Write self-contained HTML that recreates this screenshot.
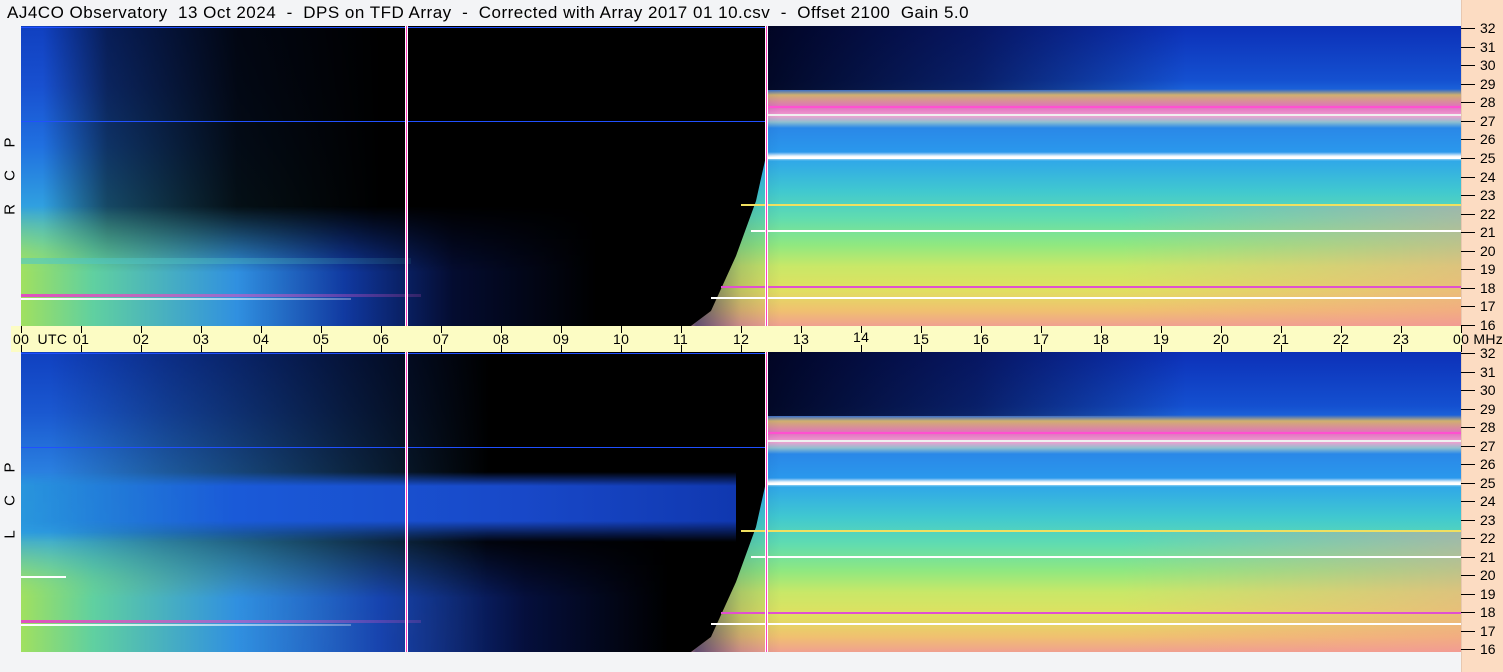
<!DOCTYPE html>
<html><head><meta charset="utf-8"><style>
*{margin:0;padding:0;box-sizing:border-box}
body{width:1503px;height:672px;background:#f3f4f6;position:relative;overflow:hidden;font-family:"Liberation Sans",sans-serif;color:#000}
.abs{position:absolute}
.title{left:7px;top:3px;font-size:17px;white-space:pre;letter-spacing:0.5px}
.panel{position:absolute;left:21px;width:1440px;height:300px;background:#000;overflow:hidden}
.panel div{position:absolute}
.axis{left:1461px;top:0;width:42px;height:672px;background:#fcdcc2;border-left:1px solid #e8c8b0}
.strip{left:11px;top:326px;width:1451px;height:26px;background:#fcfcc4}
.tk{position:absolute;width:1px;height:7px;background:#000}
.ul{position:absolute;top:331px;font-size:14px;letter-spacing:0.3px}
.ml{position:absolute;left:1480px;font-size:14px;line-height:14px}
.mt{position:absolute;left:1461px;width:14px;height:1px;background:#000}
.lab{position:absolute;left:3px;font-size:15px;transform:rotate(-90deg);width:14px;text-align:center}
.vl{top:0;width:3px;height:300px;background:linear-gradient(90deg,#fff 0,#fff 33%,#ff40c0 33%,#ff40c0 66%,#fff 66%)}
.hl{left:0;height:2px;background:#fff}
.rr{left:0;top:0;width:1440px;height:300px;clip-path:polygon(745px 0,745px 130px,735px 175px,715px 230px,690px 285px,670px 300px,1440px 300px,1440px 0)}
</style></head><body>
<div class="abs title">AJ4CO Observatory  13 Oct 2024  -  DPS on TFD Array  -  Corrected with Array 2017 01 10.csv  -  Offset 2100  Gain 5.0</div>

<!-- TOP PANEL -->
<div class="panel" style="top:26px">
  <div style="left:0;top:0;width:720px;height:300px;background:linear-gradient(90deg,rgba(0,0,0,0) 0,rgba(0,0,0,0) 3%,rgba(0,0,0,.55) 12%,rgba(0,0,0,.9) 30%,#000 50%),linear-gradient(180deg,#1040c0 0,#1850d0 20%,#2070e0 40%,#30a0e0 60%,#50c0c0 72%,#90dc80 82%,#c8e060 92%,#b0d070 100%)"></div>
  <div style="left:0;top:180px;width:720px;height:120px;-webkit-mask-image:linear-gradient(180deg,transparent 0,#000 55%);background:linear-gradient(90deg,#a0e060 0,#60d0a0 10%,#3090e0 30%,rgba(20,70,200,.8) 45%,rgba(10,30,120,.4) 60%,rgba(0,0,0,0) 80%)"></div>
  <div style="left:0;top:232px;width:390px;height:6px;background:linear-gradient(90deg,rgba(80,200,200,.6),rgba(80,200,200,.1))"></div>
  <div style="left:0;top:268px;width:400px;height:3px;background:linear-gradient(90deg,#e050c0,rgba(224,80,192,.2))"></div>
  <div style="left:0;top:272px;width:330px;height:2px;background:linear-gradient(90deg,#fff,rgba(255,255,255,.3))"></div>
  <div style="left:0;top:95px;width:1440px;height:1px;background:#2050ff"></div>
  <div style="left:0;top:1px;width:1440px;height:1px;background:#2050ff"></div>
  <div class="rr" style="background:linear-gradient(180deg,#0c30b8 0,#1450d0 18%,#1a60d8 21%,#d0b070 23%,#e070c0 27%,#f0a0d0 30%,#90c0d0 32%,#2a88e8 34%,#2a98ec 42%,#fff 43.5%,#30a8e8 45%,#40c8d0 55%,#60dcb0 64%,#90e880 73%,#c8e868 80%,#e0e060 88%,#f0c070 95%,#f0a090 100%)"></div>
  <div class="rr" style="background:linear-gradient(90deg,rgba(0,0,0,0) 660px,rgba(0,20,90,.6) 675px,rgba(0,20,90,.15) 720px,rgba(0,0,0,0) 760px)"></div>
  <div style="left:745px;top:0;width:420px;height:64px;background:linear-gradient(90deg,rgba(0,0,20,.9) 0,rgba(4,10,60,.7) 50%,rgba(0,0,0,0) 100%)"></div>
  <div style="left:1100px;top:180px;width:340px;height:120px;background:linear-gradient(90deg,rgba(240,160,140,0),rgba(245,150,150,.45))"></div>
  <div class="hl" style="left:745px;top:131px;width:695px"></div>
  <div class="hl" style="left:730px;top:204px;width:710px"></div>
  <div class="hl" style="left:720px;top:178px;width:720px;background:#f0e060"></div>
  <div class="hl" style="left:690px;top:271px;width:750px"></div>
  <div class="hl" style="left:700px;top:260px;width:740px;background:#e050d0"></div>
  <div class="hl" style="left:745px;top:88px;width:695px;background:#f0f0f0"></div>
  <div class="hl" style="left:745px;top:80px;width:695px;background:#ff50d0"></div>
  <div class="vl" style="left:384px"></div>
  <div class="vl" style="left:744px"></div>
</div>

<!-- BOTTOM PANEL -->
<div class="panel" style="top:352px">
  <div style="left:0;top:0;width:720px;height:300px;background:linear-gradient(90deg,rgba(0,0,0,0) 0,rgba(0,0,0,0) 4%,rgba(0,0,0,.3) 20%,rgba(0,0,0,.7) 45%,#000 65%),linear-gradient(180deg,#1040c0 0,#1a58d0 20%,#2a80e0 40%,#30a0e0 60%,#50c0c0 72%,#90dc80 82%,#c8e060 92%,#b0d070 100%)"></div>
  <div style="left:0;top:120px;width:715px;height:70px;-webkit-mask-image:linear-gradient(180deg,transparent 0,#000 20%,#000 70%,transparent 100%);background:linear-gradient(90deg,rgba(40,150,220,.9),#1a5ad8 30%,#1848c8 70%,#1038b0 100%)"></div>
  <div style="left:0;top:180px;width:720px;height:120px;-webkit-mask-image:linear-gradient(180deg,transparent 0,#000 55%);background:linear-gradient(90deg,#a0e060 0,#60d0a0 10%,#3090e0 30%,rgba(20,70,200,.85) 50%,rgba(10,30,120,.5) 70%,rgba(0,0,0,0) 90%)"></div>
  <div style="left:0;top:268px;width:400px;height:3px;background:linear-gradient(90deg,#e050c0,rgba(224,80,192,.2))"></div>
  <div style="left:0;top:272px;width:330px;height:2px;background:linear-gradient(90deg,#fff,rgba(255,255,255,.3))"></div>
  <div style="left:0;top:224px;width:45px;height:2px;background:#fff"></div>
  <div style="left:0;top:95px;width:1440px;height:1px;background:#2050ff"></div>
  <div style="left:0;top:1px;width:1440px;height:1px;background:#2050ff"></div>
  <div class="rr" style="background:linear-gradient(180deg,#0c30b8 0,#1450d0 18%,#1a60d8 21%,#d0b070 23%,#e070c0 27%,#f0a0d0 30%,#90c0d0 32%,#2a88e8 34%,#2a98ec 42%,#fff 43.5%,#30a8e8 45%,#40c8d0 55%,#60dcb0 64%,#90e880 73%,#c8e868 80%,#e0e060 88%,#f0c070 95%,#f0a090 100%)"></div>
  <div class="rr" style="background:linear-gradient(90deg,rgba(0,0,0,0) 660px,rgba(0,20,90,.6) 675px,rgba(0,20,90,.15) 720px,rgba(0,0,0,0) 760px)"></div>
  <div style="left:745px;top:0;width:420px;height:64px;background:linear-gradient(90deg,rgba(0,0,20,.9) 0,rgba(4,10,60,.7) 50%,rgba(0,0,0,0) 100%)"></div>
  <div style="left:1100px;top:180px;width:340px;height:120px;background:linear-gradient(90deg,rgba(240,160,140,0),rgba(245,150,150,.45))"></div>
  <div class="hl" style="left:745px;top:131px;width:695px"></div>
  <div class="hl" style="left:730px;top:204px;width:710px"></div>
  <div class="hl" style="left:720px;top:178px;width:720px;background:#f0e060"></div>
  <div class="hl" style="left:690px;top:271px;width:750px"></div>
  <div class="hl" style="left:700px;top:260px;width:740px;background:#e050d0"></div>
  <div class="hl" style="left:745px;top:88px;width:695px;background:#f0f0f0"></div>
  <div class="hl" style="left:745px;top:80px;width:695px;background:#ff50d0"></div>
  <div class="vl" style="left:384px"></div>
  <div class="vl" style="left:744px"></div>
</div>

<div class="abs axis"></div>
<div class="abs strip"></div>

<div class="lab" style="top:134px">P</div>
<div class="lab" style="top:167px">C</div>
<div class="lab" style="top:201px">R</div>
<div class="lab" style="top:459px">P</div>
<div class="lab" style="top:492px">C</div>
<div class="lab" style="top:526px">L</div>

<div id="utc"></div>
<div id="mhz"></div>
<script>
var h='';
for(var i=0;i<=24;i++){
 var x=21+60*i;
 h+='<div class="tk" style="left:'+x+'px;top:326px"></div><div class="tk" style="left:'+x+'px;top:345px"></div>';
 var t=(i%24<10?'0':'')+(i%24);
 if(i==0)t='00&nbsp;&nbsp;UTC';
 if(i==24)t='00&nbsp;MHz';
 h+='<div class="ul" style="left:'+(x-8)+'px'+(i==14?';top:329px':'')+'">'+t+'</div>';
}
document.getElementById('utc').innerHTML=h;
h='';
[[28,325],[353,649]].forEach(function(p){
 for(var i=0;i<=16;i++){
  var y=Math.round(p[0]+(p[1]-p[0])*i/16);
  h+='<div class="mt" style="top:'+y+'px"></div><div class="ml" style="top:'+(y-7)+'px">'+(32-i)+'</div>';
 }
});
document.getElementById('mhz').innerHTML=h;
</script>
</body></html>
